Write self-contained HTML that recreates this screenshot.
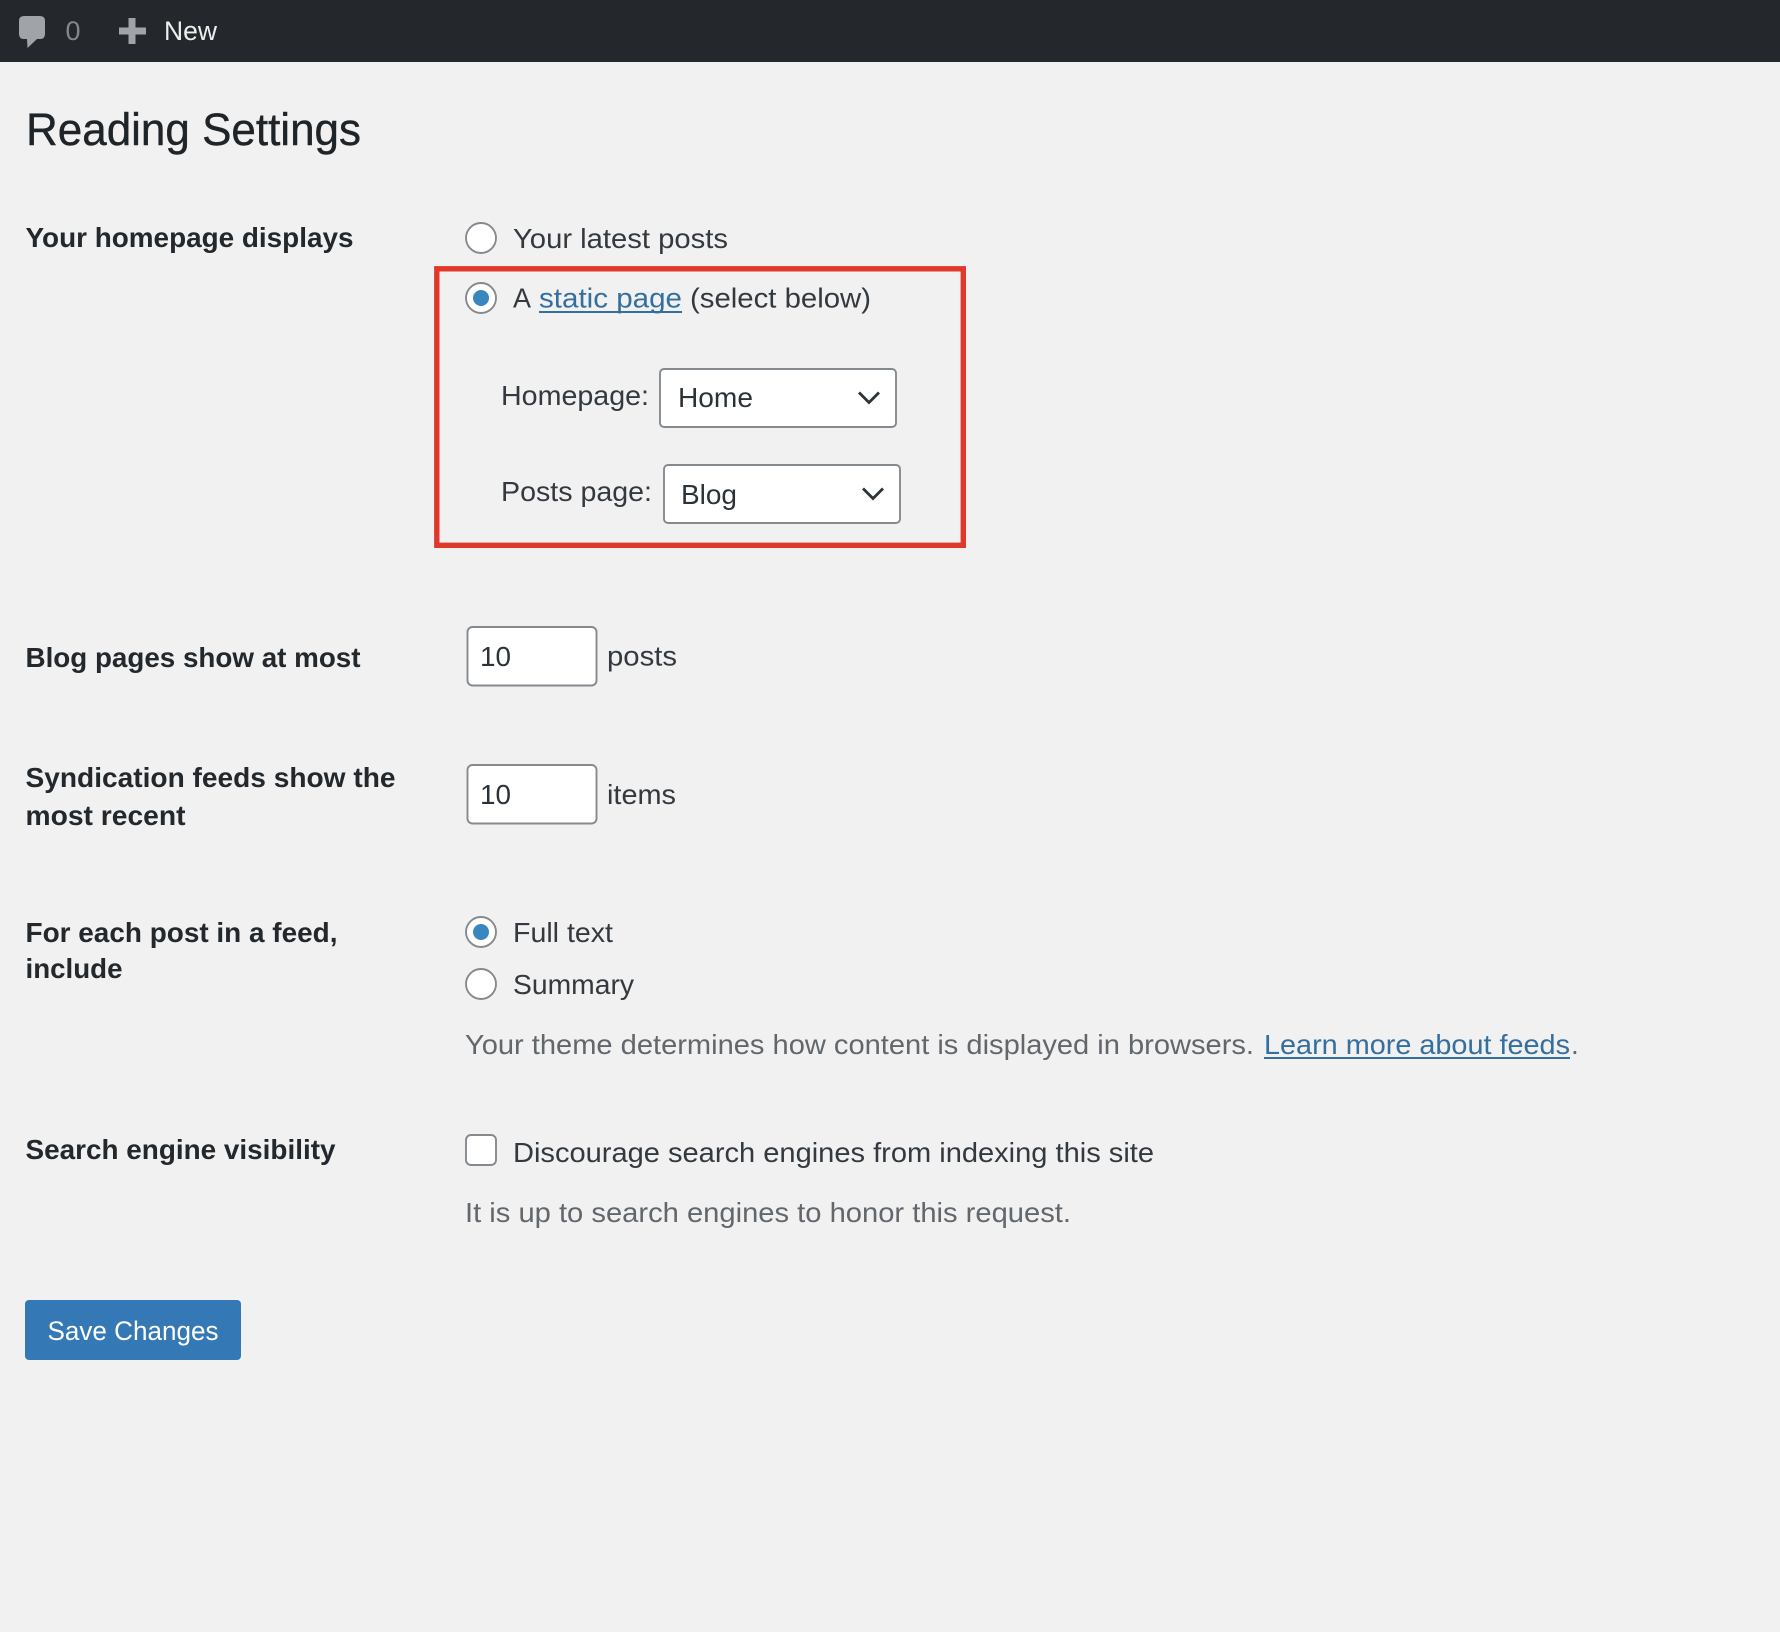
<!DOCTYPE html>
<html lang="en">
<head>
<meta charset="utf-8">
<title>Reading Settings</title>
<style>
html,body{margin:0;padding:0;background:#f1f1f2;width:1780px;height:1632px;overflow:hidden}
svg{display:block}
text{font-family:"Liberation Sans",sans-serif;font-size:28px;fill:#33393e}
.b{font-weight:700;fill:#23282d;font-size:27.5px}
.n{fill:#62676c}
.l{fill:#356f9d}
.f{fill:#fff;stroke:#858a8f;stroke-width:1.9}
.d{fill:#3a87c0}
.c{fill:none;stroke:#2c3338;stroke-width:2.8}
</style>
</head>
<body>
<svg xmlns="http://www.w3.org/2000/svg" width="1780" height="1632" viewBox="0 0 1780 1632">
<rect width="1780" height="1632" fill="#f1f1f2"/>
<rect width="1780" height="62" fill="#24282d"/>
<path d="M24 16H40Q45 16 45 21V34Q45 39 40 39H37L27.5 48L27 39H24Q19 39 19 34V21Q19 16 24 16Z" fill="#a0a3a7"/>
<text x="65.5" y="40" style="fill:#83878b;font-size:27px" textLength="15" lengthAdjust="spacingAndGlyphs">0</text>
<path d="M128.5 18H135.5V27.5H146V34.5H135.5V44H128.5V34.5H119V27.5H128.5Z" fill="#a0a3a7"/>
<text x="164" y="40" style="fill:#eeeeee;font-size:27px" textLength="53" lengthAdjust="spacingAndGlyphs">New</text>

<text x="26" y="145" style="font-size:45px;fill:#1f2428;stroke:#1f2428;stroke-width:.4" textLength="335" lengthAdjust="spacingAndGlyphs">Reading Settings</text>

<text class="b" x="25.5" y="247" textLength="328" lengthAdjust="spacingAndGlyphs">Your homepage displays</text>
<circle class="f" cx="481" cy="238" r="15"/>
<text x="513" y="248" textLength="215" lengthAdjust="spacingAndGlyphs">Your latest posts</text>

<rect x="436.8" y="268.8" width="526.5" height="276.5" fill="none" stroke="#e0392b" stroke-width="5.4"/>
<circle class="f" cx="481" cy="298" r="15"/>
<circle class="d" cx="481" cy="298" r="8"/>
<text x="513" y="307.5" textLength="18" lengthAdjust="spacingAndGlyphs">A</text>
<text class="l" x="539" y="307.5" textLength="143" lengthAdjust="spacingAndGlyphs">static page</text>
<rect x="539" y="311" width="143" height="2" fill="#356f9d"/>
<text x="690" y="307.5" textLength="181" lengthAdjust="spacingAndGlyphs">(select below)</text>

<text x="501" y="405" textLength="148" lengthAdjust="spacingAndGlyphs">Homepage:</text>
<rect class="f" x="660" y="369" width="236" height="58" rx="4"/>
<text x="678" y="407" style="fill:#2c3338" textLength="75" lengthAdjust="spacingAndGlyphs">Home</text>
<path class="c" d="M859 392.5L869 402.5L879 392.5"/>

<text x="501" y="501" textLength="151" lengthAdjust="spacingAndGlyphs">Posts page:</text>
<rect class="f" x="664" y="465" width="236" height="58" rx="4"/>
<text x="681" y="504" style="fill:#2c3338" textLength="56" lengthAdjust="spacingAndGlyphs">Blog</text>
<path class="c" d="M863 488.5L873 498.5L883 488.5"/>

<text class="b" x="25.5" y="667" textLength="335" lengthAdjust="spacingAndGlyphs">Blog pages show at most</text>
<rect class="f" x="467.5" y="627" width="129" height="58.5" rx="5"/>
<text x="480" y="666" style="fill:#2c3338" textLength="31" lengthAdjust="spacingAndGlyphs">10</text>
<text x="607" y="665.5" textLength="70" lengthAdjust="spacingAndGlyphs">posts</text>

<text class="b" x="25.5" y="787" textLength="370" lengthAdjust="spacingAndGlyphs">Syndication feeds show the</text>
<text class="b" x="25.5" y="825" textLength="160" lengthAdjust="spacingAndGlyphs">most recent</text>
<rect class="f" x="467.5" y="765" width="129" height="58.5" rx="5"/>
<text x="480" y="804" style="fill:#2c3338" textLength="31" lengthAdjust="spacingAndGlyphs">10</text>
<text x="607" y="804" textLength="69" lengthAdjust="spacingAndGlyphs">items</text>

<text class="b" x="25.5" y="942" textLength="312" lengthAdjust="spacingAndGlyphs">For each post in a feed,</text>
<text class="b" x="25.5" y="978" textLength="97" lengthAdjust="spacingAndGlyphs">include</text>
<circle class="f" cx="481" cy="932" r="15"/>
<circle class="d" cx="481" cy="932" r="8"/>
<text x="513" y="942" textLength="100" lengthAdjust="spacingAndGlyphs">Full text</text>
<circle class="f" cx="481" cy="984" r="15"/>
<text x="513" y="994" textLength="121" lengthAdjust="spacingAndGlyphs">Summary</text>
<text class="n" x="465" y="1054" textLength="789" lengthAdjust="spacingAndGlyphs">Your theme determines how content is displayed in browsers.</text>
<text class="l" x="1264" y="1054" textLength="306" lengthAdjust="spacingAndGlyphs">Learn more about feeds</text>
<rect x="1264" y="1057" width="306" height="2" fill="#356f9d"/>
<text class="n" x="1571" y="1054">.</text>

<text class="b" x="25.5" y="1159" textLength="310" lengthAdjust="spacingAndGlyphs">Search engine visibility</text>
<rect class="f" x="466" y="1135" width="30" height="30" rx="5"/>
<text x="513" y="1162" textLength="641" lengthAdjust="spacingAndGlyphs">Discourage search engines from indexing this site</text>
<text class="n" x="465" y="1222" textLength="606" lengthAdjust="spacingAndGlyphs">It is up to search engines to honor this request.</text>

<rect x="25" y="1300" width="216" height="60" rx="4" fill="#3478b6"/>
<text x="47.5" y="1340" style="fill:#fff;font-size:27px" textLength="171" lengthAdjust="spacingAndGlyphs">Save Changes</text>
</svg>
</body>
</html>
